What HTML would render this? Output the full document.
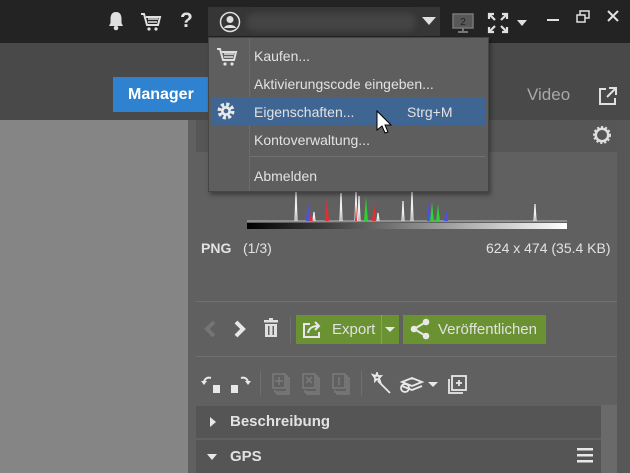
<!DOCTYPE html>
<html><head><meta charset="utf-8"><style>
*{margin:0;padding:0;box-sizing:border-box}
body{width:630px;height:473px;overflow:hidden;position:relative;background:#606060;font-family:"Liberation Sans","DejaVu Sans",sans-serif;}
.a{position:absolute}
.t{color:#e2e2e2;font-size:14px;white-space:nowrap}
</style></head><body>
<div class="a" style="left:0;top:0;width:630px;height:43px;background:#232323"></div>
<div class="a" style="left:0;top:43px;width:630px;height:77px;background:#494949"></div>
<div class="a" style="left:0;top:120px;width:188px;height:353px;background:#858585"></div>
<div class="a" style="left:617px;top:120px;width:13px;height:353px;background:#575757"></div>
<div class="a" style="left:196px;top:120px;width:421px;height:32px;background:#565656"></div>
<svg class="a" style="left:106px;top:10px" width="20" height="22" viewBox="0 0 20 22"><path d="M10 2c-4 0-5.5 3-5.5 7v4L3 16h14l-1.5-3V9c0-4-1.5-7-5.5-7z" fill="#e0e0e0"/><circle cx="10" cy="18" r="2.3" fill="#e0e0e0"/></svg>
<svg class="a" style="left:140px;top:11px" width="22" height="22" viewBox="0 0 22 22"><path d="M1 3h3l3 11h11l2-8H6" fill="none" stroke="#e0e0e0" stroke-width="2"/><path d="M8 8h10M8 11h9" stroke="#e0e0e0" stroke-width="1.5"/><circle cx="9" cy="18" r="1.6" fill="#e0e0e0"/><circle cx="16" cy="18" r="1.6" fill="#e0e0e0"/></svg>
<div class="a" style="left:180px;top:9px;color:#e0e0e0;font-size:21px;font-weight:bold">?</div>
<div class="a" style="left:208px;top:7px;width:232px;height:29px;background:#363636"></div>
<div class="a" style="left:246px;top:13px;width:170px;height:18px;background:#444;border-radius:9px;filter:blur(3px)"></div>
<svg class="a" style="left:219px;top:11px" width="22" height="22" viewBox="0 0 22 22"><circle cx="11" cy="11" r="9.5" fill="none" stroke="#e0e0e0" stroke-width="1.5"/><circle cx="11" cy="8.5" r="3.5" fill="#e0e0e0"/><path d="M5 17c1-4 11-4 12 0z" fill="#e0e0e0"/></svg>
<svg class="a" style="left:421px;top:16px" width="16" height="10"><path d="M1 1h14L8 9z" fill="#e0e0e0"/></svg>
<svg class="a" style="left:451px;top:12px" width="24" height="22" viewBox="0 0 24 22"><rect x="2" y="2" width="20" height="14" fill="#585858" stroke="#777" stroke-width="1.5"/><path d="M12 16v3M7 20h10" stroke="#777" stroke-width="2"/><text x="12" y="13" font-size="10" fill="#222" text-anchor="middle" font-family="Liberation Sans">2</text></svg>
<svg class="a" style="left:487px;top:12px" width="22" height="22" viewBox="0 0 22 22" stroke="#e0e0e0" stroke-width="2.2" fill="none"><path d="M2 7V2h5M2 2l6 6M15 2h5v5M20 2l-6 6M2 15v5h5M2 20l6-6M20 15v5h-5M20 20l-6-6"/></svg>
<svg class="a" style="left:516px;top:19px" width="12" height="8"><path d="M1 1h10L6 7z" fill="#e0e0e0"/></svg>
<div class="a" style="left:547px;top:19px;width:12px;height:2px;background:#e0e0e0"></div>
<svg class="a" style="left:576px;top:10px" width="14" height="13" fill="none" stroke="#e0e0e0" stroke-width="1.5"><rect x="1" y="5" width="8" height="7"/><path d="M4 5V1h9v7h-4"/></svg>
<svg class="a" style="left:607px;top:10px" width="12" height="12" stroke="#e0e0e0" stroke-width="2"><path d="M1 1l10 10M11 1L1 11"/></svg>
<div class="a" style="left:113px;top:77px;width:95px;height:35px;background:#2f82d0"></div>
<div class="a" style="left:128px;top:86px;color:#fff;font-size:16px;font-weight:bold">Manager</div>
<div class="a" style="left:527px;top:85px;color:#a8a8a8;font-size:17px">Video</div>
<div class="a" style="left:480px;top:85px;color:#a8a8a8;font-size:17px">n</div>
<svg class="a" style="left:598px;top:86px" width="20" height="20" fill="none" stroke="#e0e0e0" stroke-width="2"><path d="M8 3H2v15h15v-6M11 2h7v7M18 2l-9 9"/></svg>
<svg class="a" style="left:592px;top:125px" width="20" height="20" viewBox="0 0 20 20"><circle cx="10" cy="10" r="7.5" fill="#e0e0e0" stroke="#e0e0e0" stroke-width="3" stroke-dasharray="2 1.8"/><circle cx="10" cy="10" r="5" fill="#565656"/></svg>
<svg class="a" style="left:247px;top:190px" width="320" height="40" viewBox="0 0 320 40">
<path d="M0 31H320" stroke="#ddd" stroke-width="0.8"/>
<path d="M48 31l1-29 1 29M66 31l1-9 1 9M93 31l1-28 1 28M108 31l1-29 1 29M111 31l1-25 1 25M118 31l1-10 1 10M130 31l1-8 1 8M155 31l1-20 1 20M164 31l1-30 1 30M287 31l1-17 1 17" stroke="#f0f0f0" stroke-width="1.2" fill="none"/>
<path d="M59 31l2-20 2 20zM180 31l2-22 2 22zM197 31l2-12 2 12z" fill="#5050e0"/>
<path d="M62 31l2-8 2 8zM78 31l2-24 2 24zM108 31l1-17 1 17zM125 31l2-18 2 18z" fill="#e03030"/>
<path d="M117 31l2-24 2 24zM183 31l2-19 2 19zM189 31l2-17 2 17z" fill="#30d030"/>
<rect x="0" y="33" width="320" height="6" fill="url(#g)"/>
<defs><linearGradient id="g"><stop offset="0" stop-color="#000"/><stop offset="1" stop-color="#fff"/></linearGradient></defs>
</svg>
<div class="a t" style="left:201px;top:240px;font-weight:bold">PNG</div>
<div class="a t" style="left:243px;top:240px">(1/3)</div>
<div class="a t" style="left:486px;top:240px">624 x 474 (35.4 KB)</div>
<div class="a" style="left:196px;top:301px;width:421px;height:1px;background:#707070"></div>
<div class="a" style="left:196px;top:356px;width:421px;height:1px;background:#707070"></div>
<svg class="a" style="left:203px;top:320px" width="14" height="18"><path d="M11 2L4 9l7 7" fill="none" stroke="#757575" stroke-width="4"/></svg>
<svg class="a" style="left:233px;top:320px" width="14" height="18"><path d="M3 2l7 7-7 7" fill="none" stroke="#e8e8e8" stroke-width="4"/></svg>
<svg class="a" style="left:263px;top:318px" width="16" height="20" fill="#e0e0e0"><rect x="1" y="2" width="14" height="2.5"/><rect x="6" y="0" width="4" height="2"/><path d="M2 6h12v13H2zM5 8v9h1.5V8zM9.5 8v9H11V8z" fill-rule="evenodd"/></svg>
<div class="a" style="left:290px;top:316px;width:1px;height:27px;background:#6f6f6f"></div>
<div class="a" style="left:296px;top:315px;width:103px;height:29px;background:#6a9232"></div>
<div class="a" style="left:381px;top:315px;width:1px;height:29px;background:#84a852"></div>
<svg class="a" style="left:302px;top:319px" width="22" height="20" fill="none" stroke="#e8e8e8" stroke-width="2"><path d="M8 5H2v13h15v-5"/><path d="M6 14c1-5 4-7 10-7M13 3l4 4-4 4"/></svg>
<div class="a t" style="left:332px;top:321px;font-size:15px">Export</div>
<svg class="a" style="left:384px;top:326px" width="12" height="8"><path d="M1 1h10L6 6z" fill="#e8e8e8"/></svg>
<div class="a" style="left:403px;top:315px;width:143px;height:29px;background:#6a9232"></div>
<svg class="a" style="left:409px;top:318px" width="22" height="22" fill="#e8e8e8"><circle cx="17" cy="4" r="3.3"/><circle cx="5" cy="11" r="3.3"/><circle cx="17" cy="18" r="3.3"/><path d="M5 11L17 4M5 11l12 7" stroke="#e8e8e8" stroke-width="2"/></svg>
<div class="a t" style="left:438px;top:321px;font-size:15px">Veröffentlichen</div>
<svg class="a" style="left:200px;top:372px" width="52" height="22" fill="#e8e8e8"><path d="M4 10c1-4 4-5 7-4" fill="none" stroke="#e8e8e8" stroke-width="2"/><path d="M1 9l3 4 3-4z"/><rect x="13" y="13" width="7" height="8"/><rect x="31" y="13" width="7" height="8"/><path d="M48 10c-1-4-4-5-7-4" fill="none" stroke="#e8e8e8" stroke-width="2"/><path d="M45 9l3 4 3-4z"/></svg>
<div class="a" style="left:260px;top:371px;width:1px;height:25px;background:#6f6f6f"></div>
<svg class="a" style="left:271px;top:372px" width="90" height="24" fill="none" stroke="#7a7a7a" stroke-width="1.5"><rect x="2" y="2" width="12" height="14"/><path d="M4 18v2h12V4h-2M6 20v2h12V6h-2M8 5v8M4 9h8"/><rect x="32" y="2" width="12" height="14"/><path d="M34 18v2h12V4h-2M36 20v2h12V6h-2M35 5l6 6M41 5l-6 6"/><rect x="62" y="2" width="12" height="14"/><path d="M64 18v2h12V4h-2M66 20v2h12V6h-2M68 5v8"/></svg>
<div class="a" style="left:361px;top:371px;width:1px;height:25px;background:#6f6f6f"></div>
<svg class="a" style="left:370px;top:372px" width="100" height="24" fill="none" stroke="#e8e8e8" stroke-width="1.8"><path d="M8 9l12 12M3 3l3 1 1-3 1 3 3 0-2 2 1 3-3-2-2 2 0-3z"/><path d="M32 10l10-4 10 4-10 4zM32 14l10 4 10-4"/><circle cx="35" cy="16" r="4"/><path d="M58 10h10L63 15z" fill="#e8e8e8" stroke="none"/><rect x="82" y="4" width="14" height="14"/><path d="M79 7v14h14M89 8v6M86 11h6"/></svg>
<div class="a" style="left:196px;top:406px;width:405px;height:32px;background:#555"></div>
<div class="a" style="left:196px;top:440px;width:405px;height:33px;background:#555"></div>
<div class="a" style="left:601px;top:405px;width:16px;height:68px;background:#6a6a6a"></div>
<svg class="a" style="left:209px;top:416px" width="8" height="12"><path d="M1 1l6 5-6 5z" fill="#e8e8e8"/></svg>
<div class="a t" style="left:230px;top:413px;font-size:15px;font-weight:bold">Beschreibung</div>
<svg class="a" style="left:206px;top:453px" width="12" height="8"><path d="M1 1h10L6 7z" fill="#e8e8e8"/></svg>
<div class="a t" style="left:230px;top:448px;font-size:15px;font-weight:bold">GPS</div>
<svg class="a" style="left:577px;top:447px" width="18" height="16" fill="#e8e8e8"><rect y="1" width="16" height="2.5"/><rect y="7" width="16" height="2.5"/><rect y="13" width="16" height="2.5"/></svg>
<div class="a" style="left:208px;top:37px;width:281px;height:155px;background:#5e5e5e;border:1px solid #454545;box-shadow:2px 3px 4px rgba(0,0,0,.35)"></div>
<div class="a" style="left:249px;top:38px;width:1px;height:153px;background:#6c6c6c"></div>
<div class="a" style="left:211px;top:97px;width:274px;height:28px;background:#3f6593"></div>
<div class="a" style="left:250px;top:156px;width:235px;height:1px;background:#717171"></div>
<svg class="a" style="left:216px;top:46px" width="22" height="22" viewBox="0 0 22 22"><path d="M1 3h3l3 11h11l2-8H6" fill="none" stroke="#e0e0e0" stroke-width="2"/><path d="M8 8h10M8 11h9" stroke="#e0e0e0" stroke-width="1.5"/><circle cx="9" cy="18" r="1.6" fill="#e0e0e0"/><circle cx="16" cy="18" r="1.6" fill="#e0e0e0"/></svg>
<svg class="a" style="left:216px;top:101px" width="20" height="20" viewBox="0 0 20 20"><circle cx="10" cy="10" r="6.5" fill="none" stroke="#e8e8e8" stroke-width="4" stroke-dasharray="3 2.1"/><circle cx="10" cy="10" r="5" fill="#e8e8e8"/><circle cx="10" cy="10" r="2.3" fill="#3f6593"/></svg>
<div class="a t" style="left:254px;top:48px">Kaufen...</div>
<div class="a t" style="left:254px;top:76px">Aktivierungscode eingeben...</div>
<div class="a t" style="left:254px;top:104px">Eigenschaften...</div>
<div class="a t" style="left:407px;top:104px">Strg+M</div>
<div class="a t" style="left:254px;top:132px">Kontoverwaltung...</div>
<div class="a t" style="left:254px;top:168px">Abmelden</div>
<svg class="a" style="left:376px;top:110px" width="18" height="26"><path d="M1 1v19l5-4 3 7 3-1-3-7h6z" fill="#fff" stroke="#000" stroke-width="1"/></svg>
</body></html>
